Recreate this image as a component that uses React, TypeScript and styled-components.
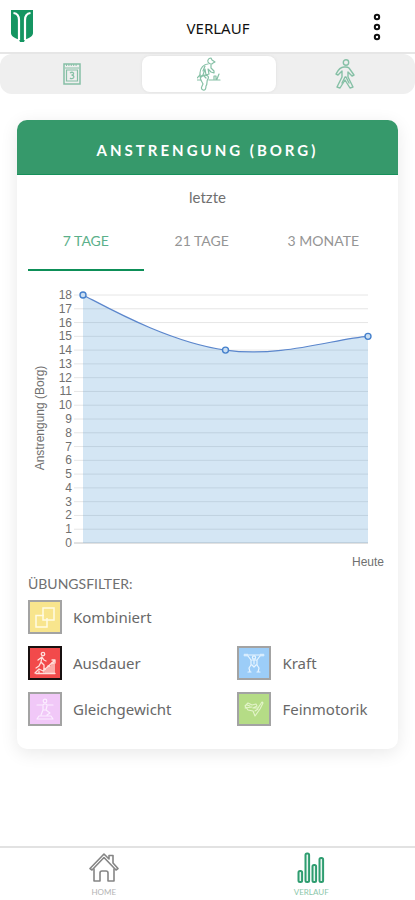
import React, { useState } from "react";
import styled, { createGlobalStyle } from "styled-components";

const GREEN = "#36996b";
const DEEP_GREEN = "#0d8f58";

const GlobalStyle = createGlobalStyle`
  *, *::before, *::after { box-sizing: border-box; }
  body {
    margin: 0;
    background: #fff;
    color: #555;
    font-family: Lato, "Noto Sans", sans-serif;
    font-size: 15px;
    line-height: 20px;
  }
  button { font: inherit; color: inherit; background: none; border: 0; padding: 0; margin: 0; cursor: pointer; }
  svg { display: block; }
`;

const Screen = styled.div`
  display: flex;
  flex-direction: column;
  min-height: 100vh;
`;

const TopBar = styled.header`
  display: grid;
  grid-template-columns: 22px 1fr 20px;
  align-items: center;
  height: 54px;
  padding: 0 28px 0 11px;
  border-bottom: 2px solid #e6e6e6;
`;

const Title = styled.h1`
  margin: 4px 0 0;
  padding-left: 36px;
  text-align: center;
  font: 400 15px/20px "Noto Sans", sans-serif;
  color: #111;
`;

const MenuButton = styled.button`
  display: flex;
  justify-content: center;
  padding-top: 2px;
`;

const Segments = styled.nav`
  display: grid;
  grid-template-columns: 1fr 134px 1fr;
  height: 40px;
  padding: 2px 0 2px 2px;
  border-radius: 12px;
  background: #efefef;
`;

const Segment = styled.button<{ $active?: boolean }>`
  display: flex;
  align-items: center;
  justify-content: center;
  border-radius: 8px;
  background: ${(p) => (p.$active ? "#fff" : "transparent")};
  box-shadow: ${(p) => (p.$active ? "0 0 3px #dedede" : "none")};
  color: #86c0a6;
`;

const Main = styled.main`
  flex: 1;
  padding: 26px 17px 32px;
`;

const Card = styled.section`
  border-radius: 10px;
  background: #fff;
  box-shadow: 0 4px 18px rgba(0, 0, 0, 0.09);
  overflow: hidden;
`;

const CardTitle = styled.h2`
  margin: 0;
  padding: 20px 0 14px;
  border-bottom: 1px solid #16905a;
  background: ${GREEN};
  color: #fff;
  text-align: center;
  font-size: 15px;
  font-weight: 700;
  line-height: 20px;
  letter-spacing: 3px;
`;

const CardBody = styled.div`
  padding: 12px 11px 23px;
`;

const Lead = styled.p`
  margin: 0;
  text-align: center;
  font-size: 15px;
  color: #707070;
`;

const Tabs = styled.div`
  display: grid;
  grid-template-columns: 1fr 1fr auto;
  margin-top: 5px;
`;

const Tab = styled.button<{ $active: boolean }>`
  height: 59px;
  padding: 0 28px;
  border-bottom: 2px solid ${(p) => (p.$active ? DEEP_GREEN : "transparent")};
  color: ${(p) => (p.$active ? "#5bb08a" : "#959595")};
  font-size: 14px;
  white-space: nowrap;
`;

const Chart = styled.svg`
  width: 100%;
  height: auto;
  margin-top: 14px;
  font-family: "Liberation Sans", Arial, sans-serif;
  font-size: 12px;
  fill: #707070;
`;

const FilterTitle = styled.h3`
  margin: 2px 0 6px;
  font-size: 14px;
  font-weight: 400;
  line-height: 20px;
  color: #707070;
`;

const Filters = styled.div`
  display: grid;
  grid-template-columns: 7fr 5fr;
  row-gap: 12px;
`;

const Filter = styled.button<{ $wide?: boolean }>`
  display: flex;
  align-items: center;
  gap: 11px;
  grid-column: ${(p) => (p.$wide ? "1 / -1" : "auto")};
  text-align: left;
  font: 400 15px/20px "Noto Sans", sans-serif;
  color: #686868;
`;

const Swatch = styled.span<{ $color: string; $selected?: boolean }>`
  display: flex;
  align-items: center;
  justify-content: center;
  width: 34px;
  height: 34px;
  border: 2px solid ${(p) => (p.$selected ? "#181010" : "#a3a3a3")};
  background: ${(p) => p.$color};
`;

const BottomNav = styled.nav`
  display: grid;
  grid-template-columns: 1fr 1fr;
  height: 54px;
  border-top: 2px solid #e2e2e2;
`;

const NavLink = styled.a<{ $active?: boolean }>`
  display: flex;
  flex-direction: column;
  align-items: center;
  gap: 3px;
  padding-top: 4px;
  font-size: 8px;
  line-height: 10px;
  text-decoration: none;
  color: ${(p) => (p.$active ? "#8cc7ab" : "#b4b4b4")};
`;

const Logo = () => (
  <svg width="22" height="32" viewBox="0 0 22 32" role="img" aria-label="Logo">
    <path d="M0 0H22V23C22 26 19 28 14 29.500L13 32H9L8 29.500C3 28 0 26 0 23Z" fill="#159562" />
    <path d="M2.500 3C6.500 3.500 8 6 8 10V30M19.500 3C15.500 3.500 14 6 14 10V30" fill="none" stroke="#fff" strokeWidth="2.200" />
  </svg>
);

const Dots = () => (
  <svg width="8" height="28" viewBox="0 0 8 28" fill="#fff" stroke="#111" strokeWidth="2">
    <circle cx="4" cy="4" r="2.200" />
    <circle cx="4" cy="14" r="2.200" />
    <circle cx="4" cy="24" r="2.200" />
  </svg>
);

const CalendarIcon = () => (
  <svg width="18" height="22" viewBox="0 0 18 22" fill="none" stroke="currentColor">
    <path d="M1 1H17V21H1Z" strokeWidth="1.500" />
    <path d="M3 2H15" strokeWidth="2" strokeDasharray="1 1.400" />
    <path d="M2 5H16" />
    <path d="M3.500 7H14.500V18H3.500Z" strokeWidth="1.200" />
    <path d="M7 10C9 8.500 11 9.500 10.500 11C10.200 12 9 12 8.500 12C10 12 11.300 13 10.700 14.500C10 16 8 16 7 15" strokeWidth="1.300" />
  </svg>
);

const ExerciseIcon = () => (
  <svg width="24" height="34" viewBox="0 0 24 34" fill="none" stroke="currentColor" strokeWidth="1.200" strokeLinejoin="round" strokeLinecap="round">
    <path d="M11 5C10 2 13 1 14 1L15 3L18 5L16 6C15 8 12 7 11 5Z" />
    <path d="M11 7C7 7 3 11 3 16L3 20L6 18L8 12L9 18L12 17L11 12L14 15L17 16L17 14L14 11L14 8" />
    <path d="M4 20C7 17 13 18 11 22C9 24 11 26 9 29C9 32 8 33.500 6 33C3 32 5 29 6 27C5 24 2 22 4 20Z" />
    <path d="M0 23H4M12 23H23M17 22V19H19V22M20 22L22 17" />
    <path d="M7 19L9 21M8 9L6 14M0 21L3 18" />
  </svg>
);

const WalkIcon = () => (
  <svg width="20" height="30" viewBox="0 0 20 30" fill="none" stroke="currentColor" strokeWidth="1.400" strokeLinejoin="round" strokeLinecap="round">
    <circle cx="11" cy="3.500" r="2.700" />
    <path d="M9 8C6 8 3 11 1 15L3 16L7 12L7 18L2 28L5 29L10 21L15 29L18 28L13 18V13L17 17L19 16L14 9C12.500 7.500 11 8 9 8Z" />
    <path d="M10 18L7 24M11 18L14 24" />
  </svg>
);

const CombinedIcon = () => (
  <svg width="22" height="24" viewBox="0 0 22 24" fill="none" stroke="#fffbe4" strokeWidth="1.500">
    <path d="M13 13V22H2V10.500H10" />
    <path d="M9 3H20V15H9Z" />
  </svg>
);

const EnduranceIcon = () => (
  <svg width="22" height="24" viewBox="0 0 22 24" fill="none" stroke="#ffe0dc" strokeWidth="1.300" strokeLinecap="round" strokeLinejoin="round">
    <circle cx="9" cy="3" r="1.700" />
    <path d="M4 9L8 6L10 9L12 10M8 6L7 11L10 14L10 18M7 11L5 15L2 17M1 22L5 18L9 20L20 10M18 9H21V12" />
    <path d="M2 22.500H21M10 21V18H12V22M14 22V15H16V22M18 22V12H20V22M5 20V22" />
  </svg>
);

const BalanceIcon = () => (
  <svg width="20" height="22" viewBox="0 0 20 22" fill="none" stroke="#fbeeff" strokeWidth="1.200" strokeLinecap="round" strokeLinejoin="round">
    <circle cx="10" cy="3" r="1.800" />
    <path d="M2 7H8L9 6H11L12 7H18M8 8V12L6 17M12 8L11 12L15 15L12 17M8 12L11 12M4 18H16L18 21H2Z" />
  </svg>
);

const StrengthIcon = () => (
  <svg width="22" height="22" viewBox="0 0 22 22" fill="none" stroke="#e8f5ff" strokeWidth="1.200" strokeLinecap="round" strokeLinejoin="round">
    <path d="M1 3H21M2 2V4M4 2V4M18 2V4M20 2V4" />
    <circle cx="11" cy="5.500" r="1.600" />
    <path d="M5 4L8 8V13L6 16L7 20M17 4L14 8V13L16 16L15 20M9 8H13M9 13L11 15L13 13M5 20H8M14 20H17M11 8V12" />
  </svg>
);

const MotorIcon = () => (
  <svg width="20" height="18" viewBox="0 0 20 18" fill="none" stroke="#e4f4cb" strokeWidth="1.100" strokeLinecap="round" strokeLinejoin="round">
    <path d="M1 6L4 3L8 5L12 4L13 6L9 8L14 8L18 2L19 3L16 9L11 16L9 11L4 10ZM1 8L8 7M3 5L6 6M11 11L14 9" />
  </svg>
);

const HomeIcon = () => (
  <svg width="30" height="32" viewBox="0 0 30 32" fill="none" stroke="#858585" strokeWidth="1.600" strokeLinejoin="round" strokeLinecap="round">
    <path d="M1 16.500L15 2L20 7V3.500H24V11L29 16.500L27 18L15 5.500L3 18Z" />
    <path d="M5 17V29H11V21Q11 19 13 19H17Q19 19 19 21V29H25V17" />
  </svg>
);

const BarsIcon = () => (
  <svg width="28" height="32" viewBox="0 0 28 32" fill="#e6f4ee" stroke="#2f9d70" strokeWidth="2">
    <rect x="1.500" y="19" width="3.600" height="11" rx="1.500" />
    <rect x="8.500" y="1.500" width="3.600" height="28.500" rx="1.500" />
    <rect x="15.500" y="13" width="3.600" height="17" rx="1.500" />
    <rect x="22.500" y="6" width="3.600" height="24" rx="1.500" />
  </svg>
);

const PLOT = { left: 55, right: 340, top: 10, bottom: 258, max: 18 };
const yOf = (v: number) => PLOT.bottom - ((PLOT.bottom - PLOT.top) * v) / PLOT.max;
const xOf = (i: number) => PLOT.left + ((PLOT.right - PLOT.left) * i) / 2;
const DATA = [18, 14, 15];
const ticks = Array.from({ length: PLOT.max + 1 }, (_, i) => i);
const curve = `M${xOf(0)} ${yOf(18)}C75 20 139 57 ${xOf(1)} ${yOf(14)}C253 73 ${xOf(2) - 32} ${yOf(15) + 2} ${xOf(2)} ${yOf(15)}`;

const EffortChart = () => (
  <Chart viewBox="0 0 359 287" role="img" aria-label="Anstrengung (Borg)">
    {ticks.map((t) => (
      <g key={t}>
        <line x1={46} x2={PLOT.right} y1={yOf(t)} y2={yOf(t)} stroke={t === 0 ? "#c4c4c4" : "#e6e6e6"} />
        <text x={44} y={yOf(t) + 4} textAnchor="end">{t}</text>
      </g>
    ))}
    <path d={`${curve}V${PLOT.bottom}H${PLOT.left}Z`} fill="#4b95d0" fillOpacity="0.240" />
    <path d={curve} fill="none" stroke="#5b86cc" strokeWidth="1.200" />
    {DATA.map((v, i) => (
      <circle key={i} cx={xOf(i)} cy={yOf(v)} r="3" fill="#c9def2" stroke="#4580cc" strokeWidth="1.400" />
    ))}
    <text transform="translate(16 133) rotate(-90)" textAnchor="middle">Anstrengung (Borg)</text>
    <text x={PLOT.right} y={281} textAnchor="middle">Heute</text>
  </Chart>
);

const RANGES = ["7 TAGE", "21 TAGE", "3 MONATE"];

const FILTERS = [
  { label: "Kombiniert", color: "#f8e58d", icon: <CombinedIcon />, wide: true },
  { label: "Ausdauer", color: "#f24a4b", icon: <EnduranceIcon /> },
  { label: "Kraft", color: "#9ccdf8", icon: <StrengthIcon /> },
  { label: "Gleichgewicht", color: "#f1c8f8", icon: <BalanceIcon /> },
  { label: "Feinmotorik", color: "#b5dc86", icon: <MotorIcon /> },
];

export default function App() {
  const [range, setRange] = useState(RANGES[0]);
  const [filter, setFilter] = useState("Ausdauer");

  return (
    <Screen>
      <GlobalStyle />
      <TopBar>
        <Logo />
        <Title>VERLAUF</Title>
        <MenuButton aria-label="Menü"><Dots /></MenuButton>
      </TopBar>
      <Segments aria-label="Ansicht">
        <Segment aria-label="Kalender"><CalendarIcon /></Segment>
        <Segment aria-label="Übungen" $active><ExerciseIcon /></Segment>
        <Segment aria-label="Gehen"><WalkIcon /></Segment>
      </Segments>
      <Main>
        <Card>
          <CardTitle>ANSTRENGUNG (BORG)</CardTitle>
          <CardBody>
            <Lead>letzte</Lead>
            <Tabs role="tablist">
              {RANGES.map((r) => (
                <Tab key={r} role="tab" aria-selected={r === range} $active={r === range} onClick={() => setRange(r)}>
                  {r}
                </Tab>
              ))}
            </Tabs>
            <EffortChart />
            <FilterTitle>ÜBUNGSFILTER:</FilterTitle>
            <Filters>
              {FILTERS.map((f) => (
                <Filter key={f.label} $wide={f.wide} aria-pressed={f.label === filter} onClick={() => setFilter(f.label)}>
                  <Swatch $color={f.color} $selected={f.label === filter}>{f.icon}</Swatch>
                  {f.label}
                </Filter>
              ))}
            </Filters>
          </CardBody>
        </Card>
      </Main>
      <BottomNav aria-label="Navigation">
        <NavLink href="#home"><HomeIcon />HOME</NavLink>
        <NavLink href="#verlauf" $active><BarsIcon />VERLAUF</NavLink>
      </BottomNav>
    </Screen>
  );
}
